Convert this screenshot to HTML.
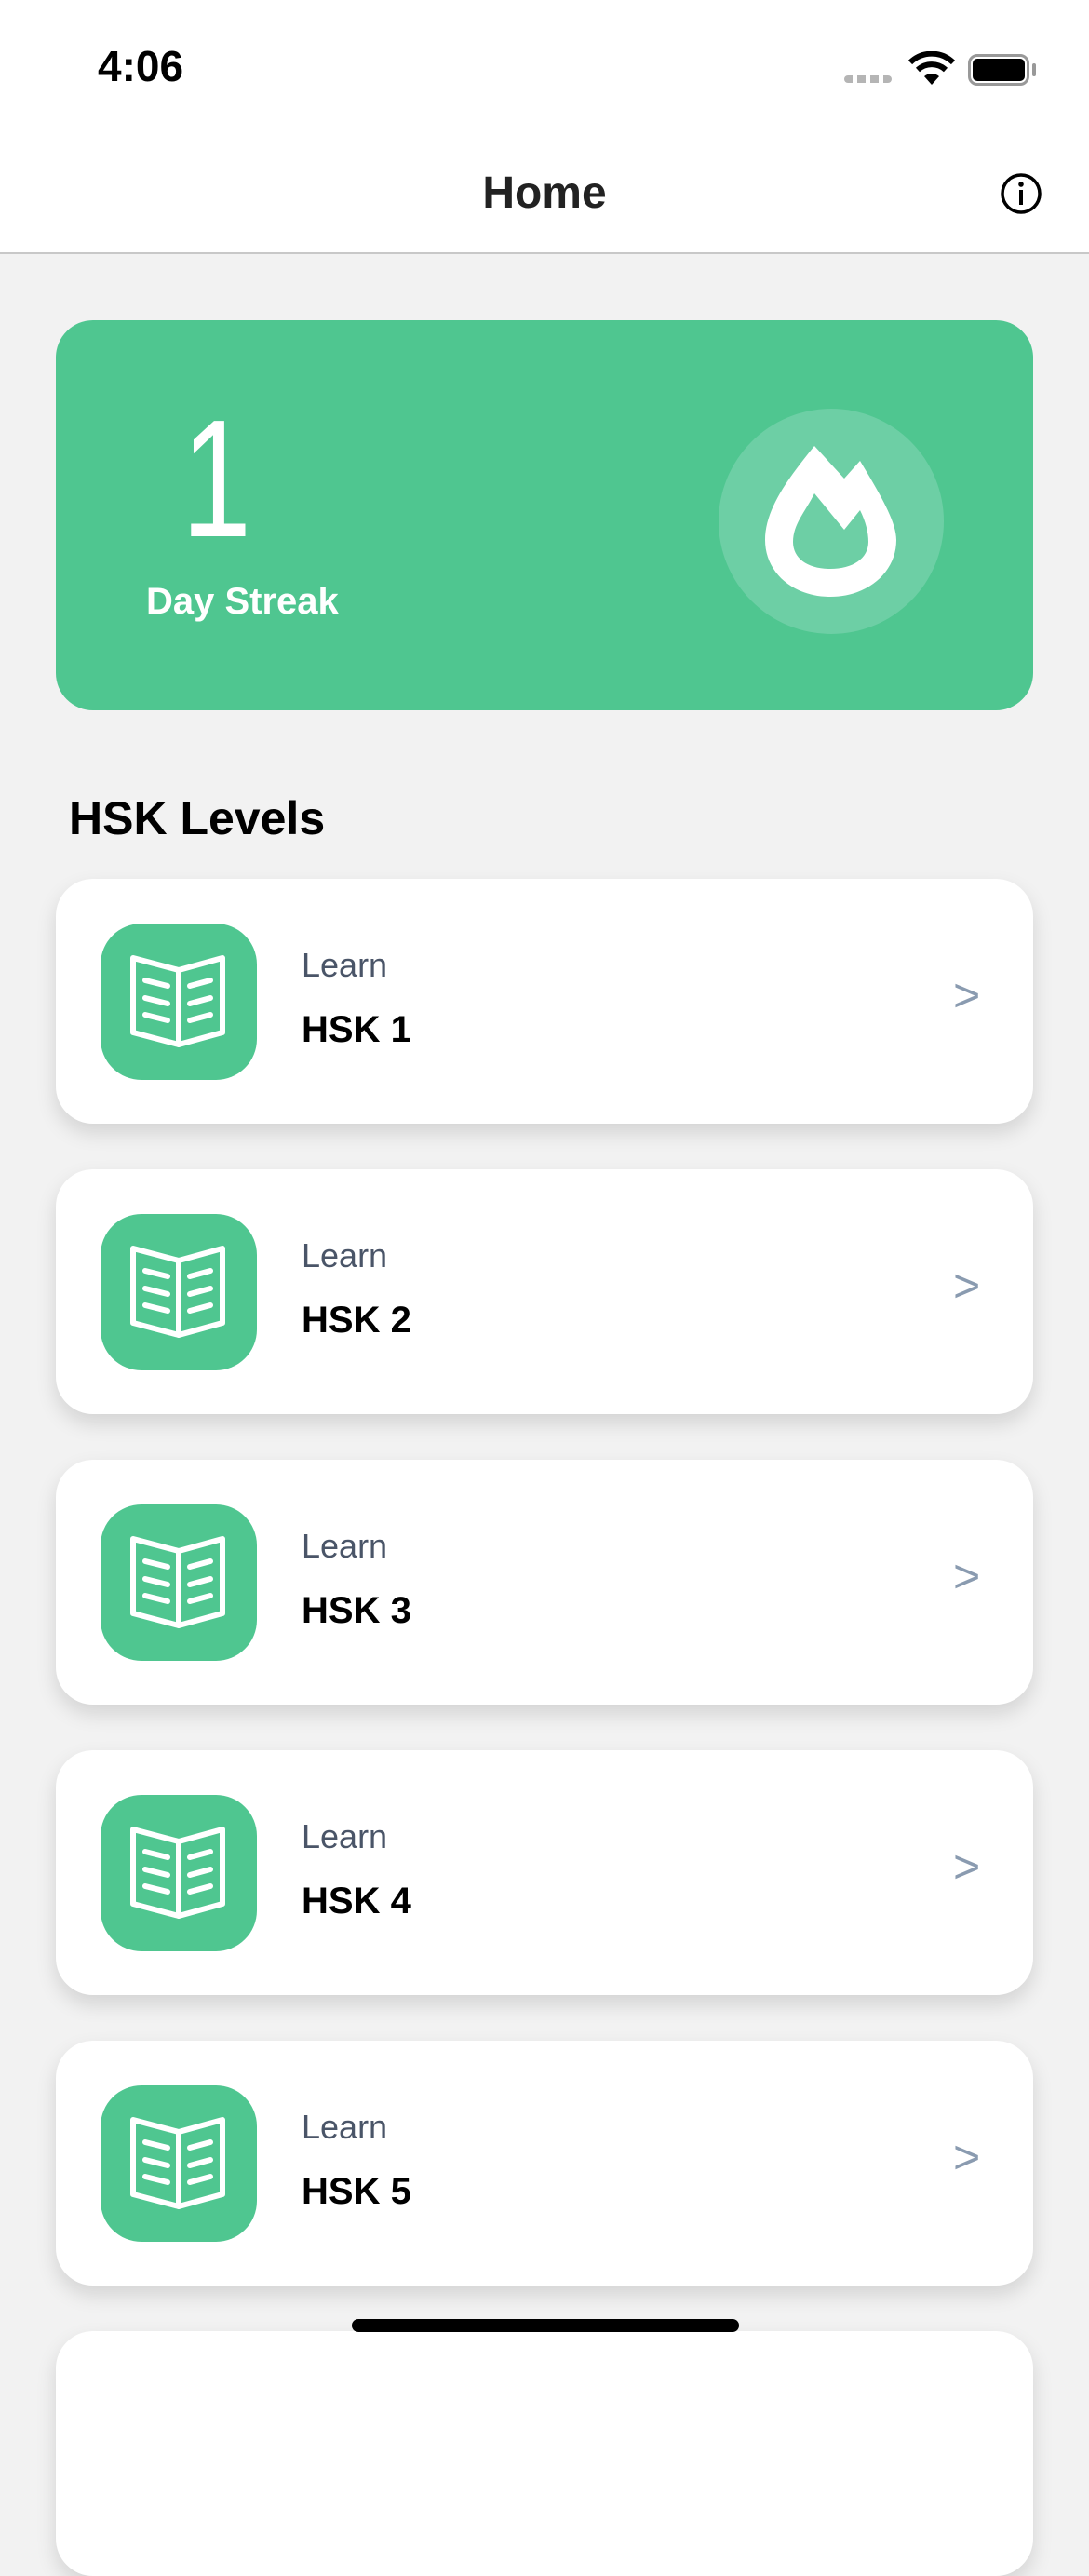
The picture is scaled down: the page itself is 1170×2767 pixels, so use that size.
<!DOCTYPE html>
<html><head><meta charset="utf-8"><style>
*{margin:0;padding:0;box-sizing:border-box}
body{width:1170px;height:2532px;background:#f2f2f2;font-family:"Liberation Sans",sans-serif;position:relative;overflow:hidden}
.abs{position:absolute}
.top{left:0;top:0;width:1170px;height:273px;background:#fff;border-bottom:2px solid #c8c8c8}
.card{position:absolute;left:60px;width:1050px;height:263px;background:#fff;border-radius:40px;box-shadow:0 10px 22px rgba(0,0,0,0.13)}
.ic{position:absolute;left:48px;top:48px;width:168px;height:168px;border-radius:44px;background:#4fc690}
.learn{position:absolute;left:264px;top:72px;font-size:36px;color:#4a5568}
.hsk{position:absolute;left:264px;top:140px;font-size:40px;font-weight:bold;color:#000}
.chev{position:absolute;left:964px;top:100px;font-size:50px;color:#8a9bb0;line-height:50px}
</style></head><body>
<div class="abs top"></div>
<div class="abs" style="left:105px;top:44px;font-size:46px;font-weight:bold;color:#000">4:06</div>
<div class="abs" style="left:907px;top:81px;width:51px;height:8px;background:repeating-linear-gradient(90deg,#b5b5b5 0 9px,transparent 9px 14px);border-radius:4px"></div>
<svg class="abs" style="left:975px;top:55px" width="52" height="38" viewBox="0 0 52 38"><path d="M26 36 L18 27 A12 12 0 0 1 34 27 Z" fill="#000"/><path d="M11 20 A22 22 0 0 1 41 20" stroke="#000" stroke-width="6" fill="none"/><path d="M3 12 A33 33 0 0 1 49 12" stroke="#000" stroke-width="6" fill="none"/></svg>
<div class="abs" style="left:1040px;top:58px;width:66px;height:34px;border:3px solid #999;border-radius:10px"></div>
<div class="abs" style="left:1045px;top:63px;width:56px;height:24px;background:#000;border-radius:5px"></div>
<div class="abs" style="left:1109px;top:68px;width:4px;height:14px;background:#999;border-radius:2px"></div>
<div class="abs" style="left:0;top:180px;width:1170px;text-align:center;font-size:48px;font-weight:bold;color:#222">Home</div>
<svg class="abs" style="left:1074px;top:185px" width="46" height="46" viewBox="0 0 46 46"><circle cx="23" cy="23" r="20" fill="none" stroke="#000" stroke-width="3.5"/><circle cx="23" cy="13" r="2.8"/><rect x="21" y="19" width="4" height="16"/></svg>

<div class="abs" style="left:60px;top:344px;width:1050px;height:419px;background:#4fc690;border-radius:40px"></div>
<div class="abs" style="left:195px;top:420px;font-size:180px;font-weight:100;color:#fff;line-height:190px;transform:scaleX(0.75);transform-origin:left">1</div>
<div class="abs" style="left:157px;top:624px;font-size:40px;font-weight:bold;color:#fff">Day Streak</div>
<svg class="abs" style="left:0;top:0" width="1170" height="800"><circle cx="893" cy="560" r="121" fill="#6dcfa5"/><path fill-rule="evenodd" fill="#fff" d="M875 479 L907 514 L924 495 C945 530 963 560 963 580 C963 615 932 641 892 641 C852 641 822 615 822 580 C822 545 850 510 875 479 Z M875 530 L907 569 L924 548 C930 560 933 572 933 582 C933 600 916 611 892 611 C868 611 852 600 852 582 C852 563 865 550 875 530 Z"/></svg>

<div class="abs" style="left:74px;top:850px;font-size:50px;font-weight:bold;color:#000">HSK Levels</div>

<svg width="0" height="0" style="position:absolute"><defs><g id="bk" fill="none" stroke="#fff" stroke-width="6" stroke-linecap="round" stroke-linejoin="round"><path d="M35 37 L84 50 L131 37 L131 117 L84 130 L35 117 Z"/><path d="M84 50 L84 130"/><path d="M48 61 L72 67 M48 80 L72 86 M48 98 L72 104 M96 67 L118 61 M96 86 L118 80 M96 104 L118 98"/></g></defs></svg>

<div class="card" style="top:944px"><div class="ic"><svg width="168" height="168"><use href="#bk"/></svg></div><div class="learn">Learn</div><div class="hsk">HSK 1</div><div class="chev">&gt;</div></div>
<div class="card" style="top:1256px"><div class="ic"><svg width="168" height="168"><use href="#bk"/></svg></div><div class="learn">Learn</div><div class="hsk">HSK 2</div><div class="chev">&gt;</div></div>
<div class="card" style="top:1568px"><div class="ic"><svg width="168" height="168"><use href="#bk"/></svg></div><div class="learn">Learn</div><div class="hsk">HSK 3</div><div class="chev">&gt;</div></div>
<div class="card" style="top:1880px"><div class="ic"><svg width="168" height="168"><use href="#bk"/></svg></div><div class="learn">Learn</div><div class="hsk">HSK 4</div><div class="chev">&gt;</div></div>
<div class="card" style="top:2192px"><div class="ic"><svg width="168" height="168"><use href="#bk"/></svg></div><div class="learn">Learn</div><div class="hsk">HSK 5</div><div class="chev">&gt;</div></div>
<div class="card" style="top:2504px"></div>
<div class="abs" style="left:378px;top:2491px;width:416px;height:14px;background:#000;border-radius:7px"></div>
</body></html>
